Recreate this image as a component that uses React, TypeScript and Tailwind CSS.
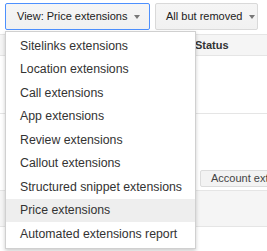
import React from "react";

const ITEMS = [
  "Sitelinks extensions",
  "Location extensions",
  "Call extensions",
  "App extensions",
  "Review extensions",
  "Callout extensions",
  "Structured snippet extensions",
  "Price extensions",
  "Automated extensions report",
];

function Caret() {
  return (
    <span className="ml-[7px] inline-block h-0 w-0 border-x-[3.5px] border-t-[4px] border-x-transparent border-t-[#777]" />
  );
}

export default function App() {
  return (
    <div className="relative h-[251px] w-[267px] overflow-hidden bg-white font-['Liberation_Sans',Arial,sans-serif]">
      {/* toolbar */}
      <div className="flex gap-[5px] pl-[5px] pt-[3px]">
        <button className="flex h-[27px] w-[145px] items-center whitespace-nowrap rounded-[2px] border border-[#4d90fe] bg-gradient-to-b from-[#f5f5f5] to-[#f1f1f1] pl-[11px] text-[11px] text-[#222]">
          View: Price extensions
          <Caret />
        </button>
        <button className="flex h-[27px] w-[103px] items-center whitespace-nowrap rounded-[2px] border border-[#d9d9d9] bg-gradient-to-b from-[#f5f5f5] to-[#f1f1f1] pl-[10px] text-[11px] text-[#222]">
          All but removed
          <Caret />
        </button>
      </div>

      {/* table behind the menu */}
      <div className="mt-[4px] flex h-[22px] items-center border-y border-[#e5e5e5] bg-[#f5f5f5] pl-[195px] text-[11px] font-bold text-[#333]">
        Status
      </div>
      <div className="h-[58px] border-b border-[#e5e5e5]" />
      <div className="flex h-[75px] items-end pb-[2px] pl-[200px]">
        <div className="flex h-[17px] items-center whitespace-nowrap rounded-[2px] border border-[#dcdcdc] bg-[#f3f3f3] pl-[10px] text-[11px] text-[#444]">
          Account extensions
        </div>
      </div>
      <div className="mt-[1px] h-[37px] border-y border-[#e5e5e5] bg-[#f5f5f5]" />

      {/* dropdown menu */}
      <div className="absolute left-[5px] top-[31px] w-[191px] border border-[#d0d0d0] bg-white py-[2px] shadow-[0_2px_4px_rgba(0,0,0,0.2)]">
        {ITEMS.map((item) => (
          <div
            key={item}
            className={
              "flex h-[23.5px] items-center whitespace-nowrap pl-[14px] text-[12.3px] text-[#333] " +
              (item === "Price extensions" ? "bg-[#eeeeee]" : "")
            }
          >
            {item}
          </div>
        ))}
      </div>
    </div>
  );
}
